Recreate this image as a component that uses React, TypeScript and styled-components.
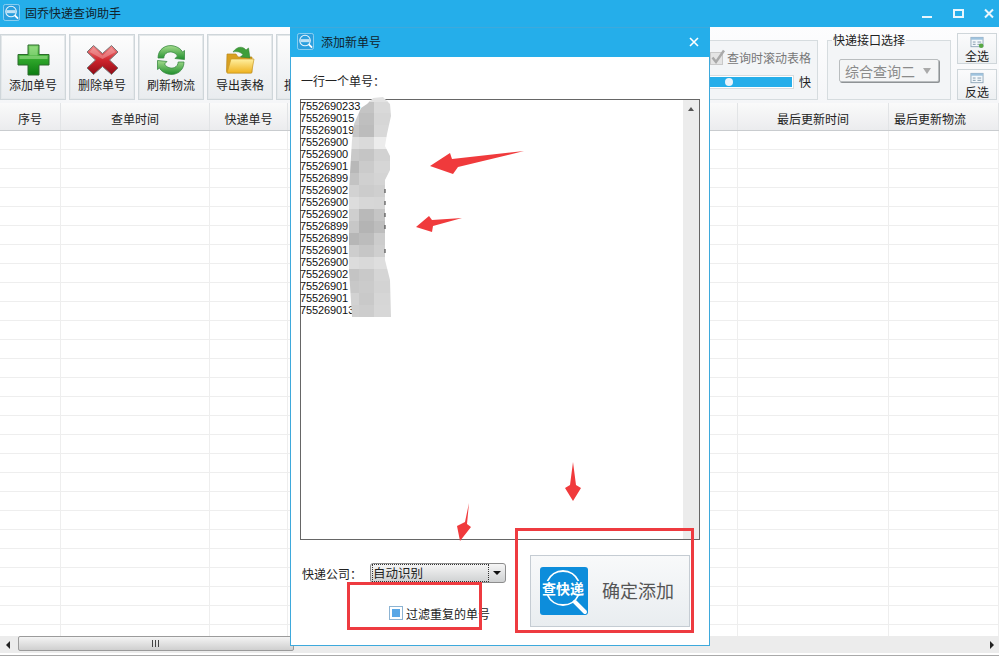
import React from "react"
import styled, { createGlobalStyle } from "styled-components"

const GlobalStyle = createGlobalStyle`
    html, body {
        margin: 0;
        padding: 0;
        background: #fff;
    }
    * {
        box-sizing: border-box;
    }
`

const Window = styled.div`
    position: relative;
    width: 999px;
    height: 658px;
    overflow: hidden;
    display: flex;
    flex-direction: column;
    background: #fff;
    font-family: "Noto Sans CJK SC", "Liberation Sans", sans-serif;
    font-size: 12px;
    color: #222;
`

const TitleBar = styled.div`
    flex: none;
    height: 27px;
    display: flex;
    align-items: center;
    gap: 5px;
    padding: 0 5px 3px 3px;
    background: #25aeea;
    color: #10222c;
`

const WindowControls = styled.div`
    margin-left: auto;
    display: flex;
    align-items: center;
    gap: 20px;
    padding-top: 3px;
`

const Toolbar = styled.div`
    flex: none;
    height: 76px;
    display: flex;
    padding: 7px 2px 3px 0;
    gap: 3px;
    background: linear-gradient(#fdfdfe, #f5f6f8);
`

const ToolButton = styled.div<{ $stub?: boolean }>`
    width: 66px;
    height: 66px;
    display: flex;
    flex-direction: column;
    align-items: ${props => props.$stub ? "flex-start" : "center"};
    padding: ${props => props.$stub ? "8px 0 0 7px" : "8px 0 0"};
    border: 1px solid #cfd6da;
    outline: 1px solid #e4e8ea;
    outline-offset: -2px;
    background: linear-gradient(#fdfdfd, #e9ecef);
`

const IconSlot = styled.div`
    height: 33px;
    display: flex;
    align-items: center;
    justify-content: center;
`

const ToolLabel = styled.span`
    margin-top: 1px;
    line-height: 16px;
    white-space: nowrap;
`

const OptionsGroup = styled.div`
    margin: 6px 6px 0 auto;
    width: 130px;
    height: 60px;
    padding: 7px 0 0 21px;
    border: 1px solid #d6dcdf;
    background: #f3f5f7;
`

const ScrollOption = styled.div`
    display: flex;
    align-items: center;
    gap: 2px;
    height: 18px;
    color: #777;
    white-space: nowrap;
`

const SpeedRow = styled.div`
    display: flex;
    align-items: center;
    gap: 6px;
    margin-top: 7px;
`

const SpeedTrack = styled.div`
    position: relative;
    width: 104px;
    height: 12px;
    margin-left: -21px;
    background: #25aeea;
    border: 1px solid #fff;
    outline: 1px solid #d7dcdf;
`

const SpeedThumb = styled.span`
    position: absolute;
    left: 35px;
    top: 1px;
    width: 8px;
    height: 8px;
    border-radius: 50%;
    background: #eaf3fa;
`

const ApiGroup = styled.fieldset`
    flex: none;
    width: 124px;
    height: 67px;
    margin: -1px 0 0;
    padding: 0 11px;
    border: 1px solid #d6dcdf;
    background: #f3f5f7;
    background-clip: padding-box;
`

const ApiLegend = styled.legend`
    margin-left: -7px;
    padding: 0 1px;
    line-height: 14px;
`

const ApiSelect = styled.div`
    display: flex;
    align-items: center;
    justify-content: space-between;
    height: 23px;
    margin-top: 12px;
    padding: 0 7px 0 5px;
    border: 1px solid #b9bdbf;
    border-radius: 2px;
    box-shadow: 1px 1px 0 #8f9396;
    background: #f4f5f6;
    color: #8b8b8b;
    font-size: 14px;
`

const SelectColumn = styled.div`
    flex: none;
    display: flex;
    flex-direction: column;
    gap: 5px;
    margin: -1px 0 0 3px;
`

const SmallButton = styled.div`
    width: 40px;
    height: 31px;
    display: flex;
    flex-direction: column;
    align-items: center;
    padding-top: 2px;
    border: 1px solid #cfd6da;
    background: linear-gradient(#fbfbfc, #edf0f2);
    line-height: 14px;
`

const TableHead = styled.div`
    flex: none;
    height: 28px;
    display: grid;
    grid-template-columns: 61px 149px 78px 450px 151px 1fr;
    background: linear-gradient(#fafafa, #ebecee);
    border-bottom: 1px solid #c9cccf;
`

const HeadCell = styled.div<{ $left?: boolean }>`
    display: flex;
    align-items: center;
    justify-content: ${props => props.$left ? "flex-start" : "center"};
    padding: ${props => props.$left ? "4px 0 0 5px" : "4px 0 0"};
    border-right: 1px solid #e2e4e6;
`

const TableBody = styled.div`
    flex: 1;
    overflow: hidden;
`

const Row = styled.div`
    height: 19px;
    display: grid;
    grid-template-columns: 61px 149px 78px 450px 151px 1fr;
    border-bottom: 1px solid #eeeeee;
`

const Cell = styled.div`
    border-right: 1px solid #eeeeee;
`

const HScroll = styled.div`
    flex: none;
    height: 17px;
    display: flex;
    align-items: center;
    justify-content: space-between;
    background: #ececec;
    padding-right: 5px;
`

const ScrollArrow = styled.span<{ $right?: boolean }>`
    width: 0;
    height: 0;
    margin-left: ${props => props.$right ? "0" : "6px"};
    border-top: 4px solid transparent;
    border-bottom: 4px solid transparent;
    border-left: ${props => props.$right ? "4px solid #222" : "none"};
    border-right: ${props => props.$right ? "none" : "4px solid #222"};
`

const ScrollThumb = styled.div`
    position: absolute;
    left: 18px;
    bottom: 7px;
    width: 276px;
    height: 15px;
    display: flex;
    align-items: center;
    justify-content: center;
    gap: 1px;
    border: 1px solid #9b9b9b;
    border-radius: 2px;
    background: linear-gradient(#f4f4f4, #cfcfcf);
`

const Grip = styled.span`
    width: 1px;
    height: 7px;
    margin-right: 1px;
    background: #444;
`

const BottomEdge = styled.div`
    flex: none;
    height: 5px;
    padding-top: 2px;
    background: #fff;
    &::before {
        content: "";
        display: block;
        height: 1px;
        background: #a9a9a9;
    }
`

const Dialog = styled.div`
    position: absolute;
    left: 290px;
    top: 27px;
    width: 420px;
    height: 619px;
    display: flex;
    flex-direction: column;
    background: #fff;
    border: 1px solid #3ea9dc;
`

const DialogTitle = styled.div`
    flex: none;
    height: 29px;
    display: flex;
    align-items: center;
    gap: 7px;
    padding: 0 11px 2px 7px;
    margin: 0 -1px;
    background: #25aeea;
    color: #10222c;
`

const DialogBody = styled.div`
    flex: 1;
    display: flex;
    flex-direction: column;
    padding: 16px 9px 0;
`

const Hint = styled.div`
    height: 16px;
    padding-left: 1px;
    line-height: 16px;
`

const NumberBox = styled.div`
    position: relative;
    height: 441px;
    margin-top: 10px;
    display: flex;
    border: 1px solid #666;
    background: #fff;
`

const NumberList = styled.div`
    flex: 1;
    margin-left: -1px;
    font-family: "Liberation Sans", sans-serif;
    font-size: 11px;
    letter-spacing: -0.1px;
    line-height: 12px;
    color: #111;
`

const NumberLine = styled.div`
    height: 12px;
    white-space: nowrap;
`

const VScroll = styled.div`
    flex: none;
    width: 16px;
    background: #ececec;
    padding-top: 7px;
    display: flex;
    justify-content: center;
`

const UpArrow = styled.span`
    width: 0;
    height: 0;
    border-left: 3px solid transparent;
    border-right: 3px solid transparent;
    border-bottom: 4px solid #555;
`

const Blur = styled.svg`
    position: absolute;
    left: 45px;
    top: -4px;
`

const FormRow = styled.div`
    display: flex;
    justify-content: space-between;
    margin-top: 15px;
`

const FormLeft = styled.div`
    padding-top: 8px;
`

const CompanyRow = styled.div`
    display: flex;
    align-items: center;
    gap: 8px;
    padding-left: 2px;
    height: 20px;
`

const CompanySelect = styled.div`
    position: relative;
    width: 136px;
    height: 20px;
    display: flex;
    align-items: center;
    padding-left: 2px;
    border: 1px solid #8d8d8d;
    border-radius: 3px;
    background: linear-gradient(#f6f6f6, #cfd1d2);
    font-size: 12.5px;
`

const CompanyValue = styled.span`
    width: 115px;
    line-height: 16px;
    outline: 1px dotted #333;
`

const CaretDown = styled.span`
    position: absolute;
    right: 4px;
    top: 7px;
    border-left: 4px solid transparent;
    border-right: 4px solid transparent;
    border-top: 4px solid #111;
`

const FilterRow = styled.div`
    display: flex;
    align-items: center;
    gap: 3px;
    margin: 23px 0 0 89px;
    height: 14px;
`

const FilterBox = styled.span`
    flex: none;
    width: 14px;
    height: 14px;
    padding: 2px;
    border: 1px solid #8db4d3;
    background: #fff;
    &::after {
        content: "";
        display: block;
        width: 100%;
        height: 100%;
        background: #5aa7e6;
    }
`

const ConfirmButton = styled.div`
    flex: none;
    width: 160px;
    height: 72px;
    margin-right: 10px;
    display: flex;
    align-items: center;
    gap: 14px;
    padding-left: 9px;
    border: 1px solid #c5ccd3;
    background: linear-gradient(#f8f9fa, #e9edf0);
    color: #555;
    font-size: 18px;
    white-space: nowrap;
`

const ConfirmLabel = styled.span`
    margin-bottom: 3px;
`

const CloseGlyph = styled.span`
    margin-left: auto;
    display: flex;
`

const Overlay = styled.svg`
    position: absolute;
    left: 0;
    top: 0;
    pointer-events: none;
`

const FilterMark = styled.div`
    position: absolute;
    left: 347px;
    top: 582px;
    width: 135px;
    height: 48px;
    border: 3px solid #ee3b40;
    pointer-events: none;
`

const ConfirmMark = styled.div`
    position: absolute;
    left: 515px;
    top: 528px;
    width: 179px;
    height: 105px;
    border: 3px solid #ee3b40;
    pointer-events: none;
`

function Logo({ size }: { size: number }) {
    return (
        <svg width={size} height={size} viewBox="0 0 18 18">
            <rect x="0.5" y="0.5" width="17" height="17" rx="2" fill="#2b9fde" stroke="#d8eefa" strokeWidth="0.6" />
            <circle cx="8.5" cy="8" r="5.6" fill="none" stroke="#e8f5fc" strokeWidth="1.1" />
            <rect x="3.5" y="6.5" width="10" height="3.2" fill="#bfe2f6" />
            <path d="M12.5 12 L16 15.5" stroke="#fff" strokeWidth="1.8" />
        </svg>
    )
}

function PlusIcon() {
    return (
        <svg width="33" height="32" viewBox="0 0 33 32">
            <defs>
                <linearGradient id="plusFill" x1="0" y1="0" x2="0" y2="1">
                    <stop offset="0" stopColor="#7ed36a" />
                    <stop offset="0.5" stopColor="#2ea52a" />
                    <stop offset="1" stopColor="#0c7d12" />
                </linearGradient>
            </defs>
            <path d="M11 1 H22 V10.500 H32 V21 H22 V31 H11 V21 H1 V10.500 H11 Z" fill="url(#plusFill)" stroke="#2d6b2c" strokeWidth="1" strokeLinejoin="round" />
            <path d="M12.500 2.500 H20.500 V11.500 H12.500 Z M2.500 12 H30.500 V15 H2.500 Z" fill="#a6e494" opacity="0.55" />
        </svg>
    )
}

function CrossIcon() {
    return (
        <svg width="33" height="32" viewBox="0 0 33 32">
            <defs>
                <linearGradient id="crossFill" x1="0" y1="0" x2="0" y2="1">
                    <stop offset="0" stopColor="#f28a8a" />
                    <stop offset="0.5" stopColor="#d0252d" />
                    <stop offset="1" stopColor="#8e0d16" />
                </linearGradient>
            </defs>
            <path d="M7.500 1.500 L16.500 9.500 L25.500 1.500 L32 8 L23.500 16 L32 24 L25.500 30.500 L16.500 22.500 L7.500 30.500 L1 24 L9.500 16 L1 8 Z" fill="url(#crossFill)" stroke="#777" strokeWidth="1" strokeLinejoin="round" />
            <path d="M7.500 3.500 L16.500 11.500 L25.500 3.500 L29.500 8 L16.500 15 L3.500 8 Z" fill="#f6b3b3" opacity="0.45" />
        </svg>
    )
}

function RefreshIcon() {
    return (
        <svg width="28" height="32" viewBox="0 0 28 32">
            <defs>
                <linearGradient id="refreshFill" x1="0" y1="0" x2="0" y2="1">
                    <stop offset="0" stopColor="#a5dc8d" />
                    <stop offset="1" stopColor="#1f8f2c" />
                </linearGradient>
            </defs>
            <path d="M1 14 C1 5 9 0 17 2 C21 3 24 5 25.500 8 L27.500 6.500 L27.500 15.500 L18 14.500 L20.500 12 C18.500 8.500 14 7 10.500 8.500 C8 9.500 7 11.500 6.800 14 Z" fill="url(#refreshFill)" stroke="#3b8a45" strokeWidth="0.8" />
            <path d="M27 18 C27 27 19 32 11 30 C7 29 4 27 2.500 24 L0.500 25.500 L0.500 16.500 L10 17.500 L7.500 20 C9.500 23.500 14 25 17.500 23.500 C20 22.500 21 20.500 21.200 18 Z" fill="url(#refreshFill)" stroke="#3b8a45" strokeWidth="0.8" />
        </svg>
    )
}

function FolderIcon() {
    return (
        <svg width="30" height="30" viewBox="0 0 30 30">
            <defs>
                <linearGradient id="folderFill" x1="0" y1="0" x2="0" y2="1">
                    <stop offset="0" stopColor="#fff0a0" />
                    <stop offset="1" stopColor="#efb21e" />
                </linearGradient>
            </defs>
            <path d="M2 9 H11 L13 12 H27 V27 Q27 28 26 28 H3 Q1.500 28 1.500 26 Z" fill="#d9a021" stroke="#b98a1d" strokeWidth="0.7" />
            <path d="M6 14 H29 L26.500 28 H2 Z" fill="url(#folderFill)" stroke="#c99a25" strokeWidth="0.7" />
            <path d="M8 7 C12 1 18 1 21 5 L23.500 3 L25 13 L15.500 12 L18 9.500 C15.500 7 12 6 8 7 Z" fill="#3f9e3a" stroke="#2a7a2a" strokeWidth="0.5" />
        </svg>
    )
}

function ListIcon({ accent }: { accent: string }) {
    return (
        <svg width="16" height="14" viewBox="0 0 16 14">
            <rect x="1.500" y="1.500" width="13" height="10" fill="#f4f8fb" stroke="#8fa6b8" />
            <rect x="1.500" y="1.500" width="13" height="2.500" fill="#9fc3de" />
            <path d="M3.500 6.500 H6.500 M3.500 9 H6.500 M8.500 6.500 H12.500 M8.500 9 H12.500" stroke="#7f97aa" />
            {accent !== "none" && <circle cx="12.500" cy="10.500" r="2.500" fill={accent} />}
        </svg>
    )
}

function CheckedGrey() {
    return (
        <svg width="15" height="16" viewBox="0 0 15 16">
            <rect x="0.500" y="3.500" width="12" height="12" fill="#e4e4e4" stroke="#c9c9c9" />
            <path d="M2.500 8.500 L6 13 L14 1.500" fill="none" stroke="#a9a9a9" strokeWidth="2.500" />
        </svg>
    )
}

function TrackingBadge() {
    return (
        <svg width="48" height="48" viewBox="0 0 48 48">
            <rect width="48" height="48" rx="3" fill="#0d8ddb" />
            <path d="M7.500 14 A17 17 0 0 1 38.500 14" fill="none" stroke="#fff" strokeWidth="1.800" />
            <path d="M7.500 28 A17 17 0 0 0 38.500 28" fill="none" stroke="#fff" strokeWidth="1.800" />
            <text x="23" y="27" textAnchor="middle" fontFamily="'Noto Sans CJK SC', sans-serif" fontWeight="700" fontSize="14" fill="#fff">查快递</text>
            <path d="M35 35 L45 45" stroke="#fff" strokeWidth="4" strokeLinecap="round" />
        </svg>
    )
}

const blurTones = [
    ["#dcdcdc", "#c4c4c4", "#d9d9d9"],
    ["#cfcfcf", "#bfbfbf", "#d6d6d6"],
    ["#c6c6c6", "#bcbcbc", "#d8d8d8"],
    ["#dedede", "#dadada", "#ececec"],
    ["#c9c9c9", "#c5c5c5", "#d2d2d2"],
    ["#b8b8b8", "#cbcbcb", "#d6d6d6"],
    ["#c3c3c3", "#d0d0d0", "#d4d4d4"],
    ["#d2d2d2", "#cccccc", "#cfcfcf"],
    ["#dddddd", "#d7d7d7", "#d6d6d6"],
    ["#cfcfcf", "#b9b9b9", "#c5c5c5"],
    ["#c7c7c7", "#b4b4b4", "#bdbdbd"],
    ["#b6b6b6", "#bcbcbc", "#cccccc"],
    ["#cdcdcd", "#c6c6c6", "#cfcfcf"],
    ["#dcdcdc", "#d9d9d9", "#dedede"],
    ["#c4c4c4", "#c9c9c9", "#d5d5d5"],
    ["#c8c8c8", "#cbcbcb", "#d3d3d3"],
    ["#d2d2d2", "#c9c9c9", "#d6d6d6"],
    ["#cfcfcf", "#cdcdcd", "#d7d7d7"],
]

const columnEdges = [0, 13, 28]
const columnWidths = [13, 15, 17]

// mosaic patch over the tracking numbers; coords are relative to the svg box
function BlurPatch() {
    return (
        <Blur width="48" height="226" viewBox="0 0 48 226">
            <defs>
                <clipPath id="patchShape">
                    <path d="M21 8 L27 2 L37 1 L44 8 L45 20 L41 38 L39 50 L44 60 L44 74 L39 84 L39 164 L44 184 L45 221 L6 221 L3 174 L3 94 L6 44 L8 28 L15 12 Z" />
                </clipPath>
            </defs>
            <g clipPath="url(#patchShape)">
                {blurTones.map((tones, row) =>
                    tones.map((tone, col) => (
                        <rect key={`${row}-${col}`} x={columnEdges[col]} y={row * 12 + 5} width={columnWidths[col]} height="12" fill={tone} />
                    ))
                )}
                <rect x="0" y="0" width="48" height="6" fill="#e2e2e2" />
            </g>
            <path d="M39 93 V97 M39 105 V109 M39 117 V121 M39 129 V133 M39 153 V157" stroke="#333" strokeWidth="1" />
        </Blur>
    )
}

const numbers = [
    "7552690233", "755269015", "755269019", "75526900", "75526900", "75526901", "75526899",
    "75526902", "75526900", "75526902", "75526899", "75526899", "75526901", "75526900",
    "75526902", "75526901", "75526901", "755269013",
]

const tools = [
    { label: "添加单号", icon: <PlusIcon /> },
    { label: "删除单号", icon: <CrossIcon /> },
    { label: "刷新物流", icon: <RefreshIcon /> },
    { label: "导出表格", icon: <FolderIcon /> },
]

export default function App() {
    const rows = Array.from({ length: 27 }, (_, i) => i)
    return (
        <>
            <GlobalStyle />
            <Window>
                <TitleBar>
                    <Logo size={17} />
                    <span>固乔快递查询助手</span>
                    <WindowControls>
                        <svg width="11" height="11" viewBox="0 0 11 11"><rect x="0" y="8" width="10" height="2" fill="#e8f6fd" /></svg>
                        <svg width="11" height="11" viewBox="0 0 11 11"><rect x="1" y="2" width="9" height="7" fill="none" stroke="#e8f6fd" strokeWidth="2" /></svg>
                        <svg width="10" height="11" viewBox="0 0 10 11"><path d="M1 1.500 L9 9.500 M9 1.500 L1 9.500" stroke="#e8f6fd" strokeWidth="2" /></svg>
                    </WindowControls>
                </TitleBar>

                <Toolbar>
                    {tools.map(tool => (
                        <ToolButton key={tool.label}>
                            <IconSlot>{tool.icon}</IconSlot>
                            <ToolLabel>{tool.label}</ToolLabel>
                        </ToolButton>
                    ))}
                    <ToolButton $stub>
                        <IconSlot />
                        <ToolLabel>批</ToolLabel>
                    </ToolButton>
                    <OptionsGroup>
                        <ScrollOption>
                            <CheckedGrey />
                            <span>查询时滚动表格</span>
                        </ScrollOption>
                        <SpeedRow>
                            <SpeedTrack><SpeedThumb /></SpeedTrack>
                            <span>快</span>
                        </SpeedRow>
                    </OptionsGroup>
                    <ApiGroup>
                        <ApiLegend>快递接口选择</ApiLegend>
                        <ApiSelect>
                            <span>综合查询二</span>
                            <svg width="8" height="6" viewBox="0 0 8 6"><path d="M0 0 H8 L4 6 Z" fill="#aaa" /></svg>
                        </ApiSelect>
                    </ApiGroup>
                    <SelectColumn>
                        <SmallButton><ListIcon accent="#58a845" /><span>全选</span></SmallButton>
                        <SmallButton><ListIcon accent="none" /><span>反选</span></SmallButton>
                    </SelectColumn>
                </Toolbar>

                <TableHead>
                    <HeadCell>序号</HeadCell>
                    <HeadCell>查单时间</HeadCell>
                    <HeadCell>快递单号</HeadCell>
                    <HeadCell />
                    <HeadCell>最后更新时间</HeadCell>
                    <HeadCell $left>最后更新物流</HeadCell>
                </TableHead>
                <TableBody>
                    {rows.map(i => (
                        <Row key={i}>
                            <Cell /><Cell /><Cell /><Cell /><Cell /><Cell />
                        </Row>
                    ))}
                </TableBody>
                <HScroll>
                    <ScrollArrow />
                    <ScrollArrow $right />
                </HScroll>
                <BottomEdge />
                <ScrollThumb><Grip /><Grip /><Grip /></ScrollThumb>

                <Dialog>
                    <DialogTitle>
                        <Logo size={17} />
                        <span>添加新单号</span>
                        <CloseGlyph>
                            <svg width="10" height="10" viewBox="0 0 10 10"><path d="M1 1 L9 9 M9 1 L1 9" stroke="#fff" strokeWidth="1.600" /></svg>
                        </CloseGlyph>
                    </DialogTitle>
                    <DialogBody>
                        <Hint>一行一个单号：</Hint>
                        <NumberBox>
                            <NumberList>
                                {numbers.map((n, i) => <NumberLine key={i}>{n}</NumberLine>)}
                            </NumberList>
                            <VScroll><UpArrow /></VScroll>
                            <BlurPatch />
                        </NumberBox>
                        <FormRow>
                            <FormLeft>
                                <CompanyRow>
                                    <span>快递公司：</span>
                                    <CompanySelect>
                                        <CompanyValue>自动识别</CompanyValue>
                                        <CaretDown />
                                    </CompanySelect>
                                </CompanyRow>
                                <FilterRow>
                                    <FilterBox />
                                    <span>过滤重复的单号</span>
                                </FilterRow>
                            </FormLeft>
                            <ConfirmButton>
                                <TrackingBadge />
                                <ConfirmLabel>确定添加</ConfirmLabel>
                            </ConfirmButton>
                        </FormRow>
                    </DialogBody>
                </Dialog>

                <Overlay width="999" height="658" viewBox="0 0 999 658">
                    <g fill="#f03a3c">
                        <polygon points="430,166 450,153 452,159 524,151 458,167 453,174" />
                        <polygon points="416,227 429,216 432,220 462,218 433,226 432,232" />
                        <polygon points="469,503 465,522 457,526 460,541 471,527 467,524" />
                        <polygon points="573,462 570,485 565,488 573,501 581,488 576,485" />
                    </g>
                </Overlay>
                <FilterMark />
                <ConfirmMark />
            </Window>
        </>
    )
}
